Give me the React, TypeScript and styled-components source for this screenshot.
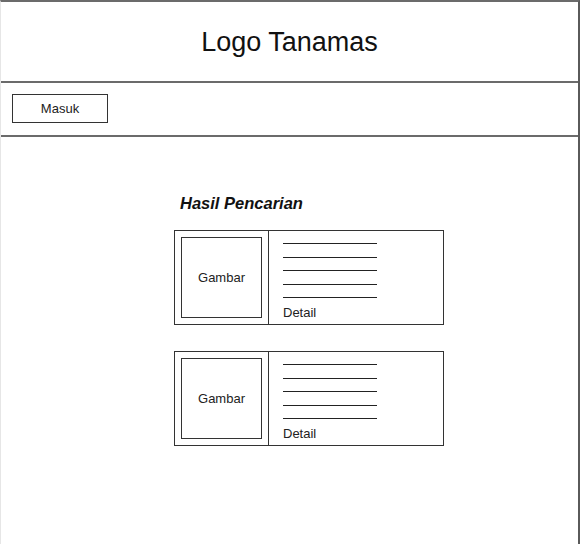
import React from 'react';
import styled, { createGlobalStyle } from 'styled-components';

type Result = {
   id: number;
   label: string;
   detail: string;
};

const RESULTS: Result[] = [
   { id: 1, label: 'Gambar', detail: 'Detail' },
   { id: 2, label: 'Gambar', detail: 'Detail' },
];

const LINE_COUNT = 5;

function ResultCard({ result }: { result: Result }) {
   return (
      <Card>
         <Thumb>
            <ThumbBox>{result.label}</ThumbBox>
         </Thumb>
         <Info>
            {Array.from({ length: LINE_COUNT }).map((_, i) => (
               <InfoLine key={i} />
            ))}
            <DetailText>{result.detail}</DetailText>
         </Info>
      </Card>
   );
}

export default function App() {
   return (
      <>
         <GlobalStyle />
         <Frame>
            <Header>
               <Logo>Logo Tanamas</Logo>
            </Header>
            <NavBar>
               <LoginButton>Masuk</LoginButton>
            </NavBar>
            <Content>
               <Results>
                  <ResultsTitle>Hasil Pencarian</ResultsTitle>
                  {RESULTS.map((result) => (
                     <ResultCard key={result.id} result={result} />
                  ))}
               </Results>
            </Content>
         </Frame>
      </>
   );
}

const GlobalStyle = createGlobalStyle`
   html, body {
      margin: 0;
      padding: 0;
      background: #ffffff;
   }
   body {
      font-family: 'Liberation Sans', Arial, sans-serif;
      color: #111;
   }
`;

const Frame = styled.div`
   width: 580px;
   height: 544px;
   box-sizing: border-box;
   border-top: 2px solid #6b6b6b;
   border-right: 2px solid #5a5a5a;
   border-left: 1px solid #e6e6e6;
   display: flex;
   flex-direction: column;
`;

const Header = styled.header`
   height: 79px;
   border-bottom: 2px solid #6b6b6b;
   display: flex;
   align-items: center;
   justify-content: center;
   flex-shrink: 0;
`;

const Logo = styled.h1`
   margin: 2px 0 0;
   font-size: 27px;
   font-weight: 400;
   color: #111;
`;

const NavBar = styled.nav`
   height: 52px;
   border-bottom: 2px solid #6b6b6b;
   display: flex;
   align-items: center;
   padding-left: 11px;
   flex-shrink: 0;
`;

const LoginButton = styled.button`
   width: 96px;
   height: 29px;
   margin-bottom: 1px;
   border: 1px solid #333;
   background: #fff;
   font-family: 'Liberation Sans', Arial, sans-serif;
   font-size: 13px;
   color: #222;
   padding: 0;
   cursor: pointer;
`;

const Content = styled.main`
   flex: 1;
   padding: 56px 0 0 173px;
`;

const Results = styled.section`
   width: 270px;
   display: flex;
   flex-direction: column;
   gap: 26px;
`;

const ResultsTitle = styled.h2`
   margin: 0 0 -9px 6px;
   font-size: 16.5px;
   line-height: 20px;
   font-weight: 700;
   font-style: italic;
   color: #111;
`;

const Card = styled.div`
   height: 95px;
   box-sizing: border-box;
   border: 1px solid #333;
   display: flex;
`;

const Thumb = styled.div`
   width: 94px;
   box-sizing: border-box;
   border-right: 1px solid #333;
   padding: 6px;
   display: flex;
`;

const ThumbBox = styled.div`
   flex: 1;
   border: 1px solid #333;
   display: flex;
   align-items: center;
   justify-content: center;
   font-size: 13px;
   color: #222;
`;

const Info = styled.div`
   flex: 1;
   padding: 12px 0 0 14px;
   display: flex;
   flex-direction: column;
`;

const InfoLine = styled.div`
   width: 94px;
   height: 1px;
   background: #222;
   margin-bottom: 12.5px;
`;

const DetailText = styled.span`
   margin-top: -6px;
   font-size: 13px;
   line-height: 15px;
   color: #222;
`;
